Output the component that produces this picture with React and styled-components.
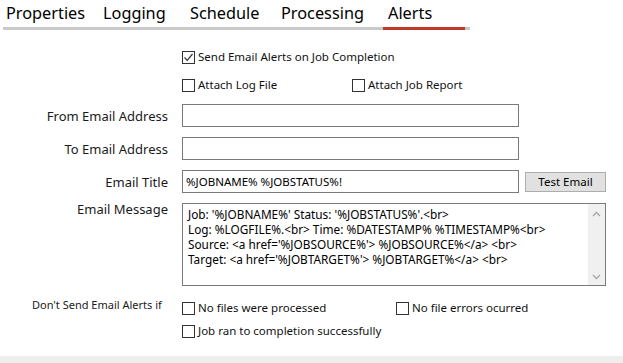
import React from 'react';
import styled, { createGlobalStyle } from 'styled-components';

const GlobalStyle = createGlobalStyle`
  html, body { margin: 0; padding: 0; background: #fff; }
  body { font-family: "Noto Sans", "Liberation Sans", sans-serif; color: #000; }
`;

const tabs = [
    { name: 'Properties', width: 97 },
    { name: 'Logging', width: 87 },
    { name: 'Schedule', width: 91 },
    { name: 'Processing', width: 105 },
    { name: 'Alerts', width: 82, active: true },
];

const message = [
    "Job: '%JOBNAME%' Status: '%JOBSTATUS%'.<br>",
    'Log: %LOGFILE%.<br> Time: %DATESTAMP% %TIMESTAMP%<br>',
    "Source: <a href='%JOBSOURCE%'> %JOBSOURCE%</a> <br>",
    "Target: <a href='%JOBTARGET%'> %JOBTARGET%</a> <br>",
];

const Check = ({ checked, children }) => (
    <CheckLabel>
        <Box>
            {checked && (
                <svg width="11" height="11" viewBox="0 0 11 11">
                    <polyline points="1.5,5.5 4.2,8.3 9.5,2" fill="none" stroke="#333" strokeWidth="1.2" />
                </svg>
            )}
        </Box>
        {children}
    </CheckLabel>
);

const Chevron = ({ up }) => (
    <svg width="9" height="6" viewBox="0 0 9 6">
        <polyline points={up ? '1,5 4.5,1.5 8,5' : '1,1 4.5,4.5 8,1'} fill="none" stroke="#a6a6a6" strokeWidth="1.3" />
    </svg>
);

export default function App() {
    return (
        <Page>
            <GlobalStyle />
            <TabBar>
                {tabs.map(t => (
                    <Tab key={t.name} width={t.width} active={t.active}>{t.name}</Tab>
                ))}
            </TabBar>

            <Form>
                <Row top={20}>
                    <Cell />
                    <Check checked>Send Email Alerts on Job Completion</Check>
                </Row>
                <Row top={14}>
                    <Cell />
                    <Pair>
                        <Check>Attach Log File</Check>
                        <Check>Attach Job Report</Check>
                    </Pair>
                </Row>

                <Row top={12}>
                    <Label>From Email Address</Label>
                    <Input />
                </Row>
                <Row top={10}>
                    <Label>To Email Address</Label>
                    <Input />
                </Row>
                <Row top={10}>
                    <Label>Email Title</Label>
                    <Inline>
                        <Input>%JOBNAME% %JOBSTATUS%!</Input>
                        <Button>Test Email</Button>
                    </Inline>
                </Row>

                <Row top={10} align="start">
                    <Label top>Email Message</Label>
                    <MessageBox>
                        <MessageText>
                            {message.map(l => <div key={l}>{l}</div>)}
                        </MessageText>
                        <Scroll>
                            <Chevron up />
                            <Chevron />
                        </Scroll>
                    </MessageBox>
                </Row>

                <Row top={15} align="start">
                    <SmallLabel>Don't Send Email Alerts if</SmallLabel>
                    <Stack>
                        <Pair wide>
                            <Check>No files were processed</Check>
                            <Check>No file errors ocurred</Check>
                        </Pair>
                        <Check>Job ran to completion successfully</Check>
                    </Stack>
                </Row>
            </Form>
            <Footer />
        </Page>
    );
}

const Page = styled.div`
  width: 623px;
  height: 363px;
  display: flex;
  flex-direction: column;
  overflow: hidden;
`;

const TabBar = styled.div`
  display: flex;
  margin-left: 3px;
  width: 467px;
  border-bottom: 3px solid #c9c9c9;
  height: 27px;
`;

const Tab = styled.div`
  width: ${p => p.width}px;
  box-sizing: border-box;
  padding-left: ${p => (p.active ? 5 : 3)}px;
  font-size: 16.3px;
  line-height: 27px;
  color: #000;
  white-space: nowrap;
  border-bottom: 3px solid ${p => (p.active ? '#c0392b' : 'transparent')};
  margin-bottom: -3px;
`;

const Form = styled.div`
  display: flex;
  flex-direction: column;
  flex: 1;
`;

const Row = styled.div`
  display: grid;
  grid-template-columns: 168px 1fr;
  column-gap: 14px;
  align-items: ${p => p.align || 'center'};
  margin-top: ${p => p.top}px;
`;

const Cell = styled.div``;

const Label = styled.div`
  text-align: right;
  font-size: 13px;
  color: #1a1a1a;
  margin-top: ${p => (p.top ? '-3px' : '0')};
`;

const SmallLabel = styled.div`
  font-size: 11px;
  line-height: 15px;
  color: #1a1a1a;
  padding-left: 32px;
  margin-top: -4px;
  white-space: nowrap;
`;

const CheckLabel = styled.label`
  display: flex;
  align-items: center;
  gap: 3px;
  font-size: 11.5px;
  line-height: 14px;
  color: #111;
  white-space: nowrap;
`;

const Box = styled.span`
  width: 13px;
  height: 13px;
  box-sizing: border-box;
  border: 1px solid #333;
  background: #fff;
  display: flex;
  align-items: center;
  justify-content: center;
`;

const Pair = styled.div`
  display: grid;
  grid-template-columns: ${p => (p.wide ? '214px' : '170px')} auto;
`;

const Stack = styled.div`
  display: flex;
  flex-direction: column;
  gap: 9px;
`;

const Inline = styled.div`
  display: flex;
  align-items: center;
  gap: 6px;
`;

const Input = styled.div`
  width: 337px;
  height: 23px;
  box-sizing: border-box;
  border: 1px solid #7a7a7a;
  background: #fff;
  font-size: 11.5px;
  line-height: 21px;
  padding-left: 3px;
  white-space: nowrap;
`;

const Button = styled.div`
  width: 81px;
  height: 20px;
  box-sizing: border-box;
  border: 1px solid #adadad;
  background: #e1e1e1;
  font-size: 11.5px;
  line-height: 18px;
  text-align: center;
`;

const MessageBox = styled.div`
  width: 424px;
  height: 83px;
  box-sizing: border-box;
  border: 1px solid #7a7a7a;
  display: flex;
  justify-content: space-between;
`;

const MessageText = styled.div`
  font-size: 11.8px;
  line-height: 15px;
  padding: 3px 0 0 5px;
  white-space: nowrap;
`;

const Scroll = styled.div`
  width: 17px;
  background: #f0f0f0;
  display: flex;
  flex-direction: column;
  justify-content: space-between;
  align-items: center;
  padding: 7px 0 5px;
`;

const Footer = styled.div`
  height: 7px;
  background: #eeeeee;
`;
